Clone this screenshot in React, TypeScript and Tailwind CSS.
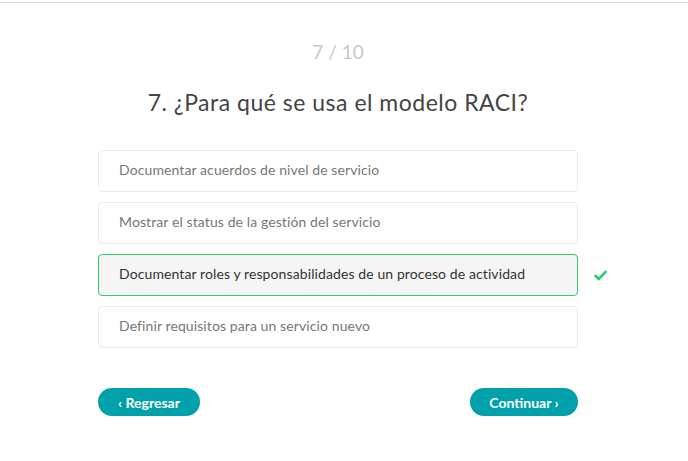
import React, { useState } from "react";

const options = [
  "Documentar acuerdos de nivel de servicio",
  "Mostrar el status de la gestión del servicio",
  "Documentar roles y responsabilidades de un proceso de actividad",
  "Definir requisitos para un servicio nuevo",
];

function CheckIcon() {
  return (
    <svg width="13" height="11" viewBox="0 0 13 11" fill="none">
      <path d="M1.5 5.8 L4.8 9 L11.5 1.8" stroke="#2ecc71" strokeWidth="2.6" strokeLinecap="round" strokeLinejoin="round" />
    </svg>
  );
}

export default function App() {
  const [selected, setSelected] = useState(2);

  return (
    <div className="min-h-[461px] w-full bg-white font-['Lato','Open_Sans',sans-serif]">
      <div className="h-[2px]" />
      <div className="h-px bg-[#dcdcdc]" />
      <div className="w-[676px] flex justify-center">
        <div className="w-[480px] flex flex-col">
          <div className="mt-[37px] text-center text-[19px] leading-[24px] text-[#c8c8c8]">7 / 10</div>
          <h1 className="mt-[24px] text-center text-[23px] leading-[28px] tracking-[0.5px] text-[#444]">
            7. ¿Para qué se usa el modelo RACI?
          </h1>
          <div className="mt-[34px] flex flex-col gap-[10px]">
            {options.map((opt, i) => {
              const active = i === selected;
              return (
                <div key={opt} className="relative">
                  <button
                    onClick={() => setSelected(i)}
                    className={
                      active
                        ? "w-full h-[42px] text-left pl-[20px] pb-[3px] rounded-[4px] border border-[#2ecc71] bg-[#f5f5f5] text-[14px] tracking-[0.1px] text-[#333]"
                        : "w-full h-[42px] text-left pl-[20px] pb-[3px] rounded-[4px] border border-[#ebebeb] bg-white text-[14px] tracking-[0.1px] text-[#777]"
                    }
                  >
                    {opt}
                  </button>
                  {active && (
                    <span className="absolute left-[496px] top-[16px]">
                      <CheckIcon />
                    </span>
                  )}
                </div>
              );
            })}
          </div>
          <div className="mt-[40px] flex justify-between">
            <button className="h-[28px] w-[102px] rounded-full bg-[#00a1ab] text-white text-[14px] font-bold">
              ‹ Regresar
            </button>
            <button className="h-[28px] w-[108px] rounded-full bg-[#00a1ab] text-white text-[14px] font-bold">
              Continuar ›
            </button>
          </div>
        </div>
      </div>
    </div>
  );
}
